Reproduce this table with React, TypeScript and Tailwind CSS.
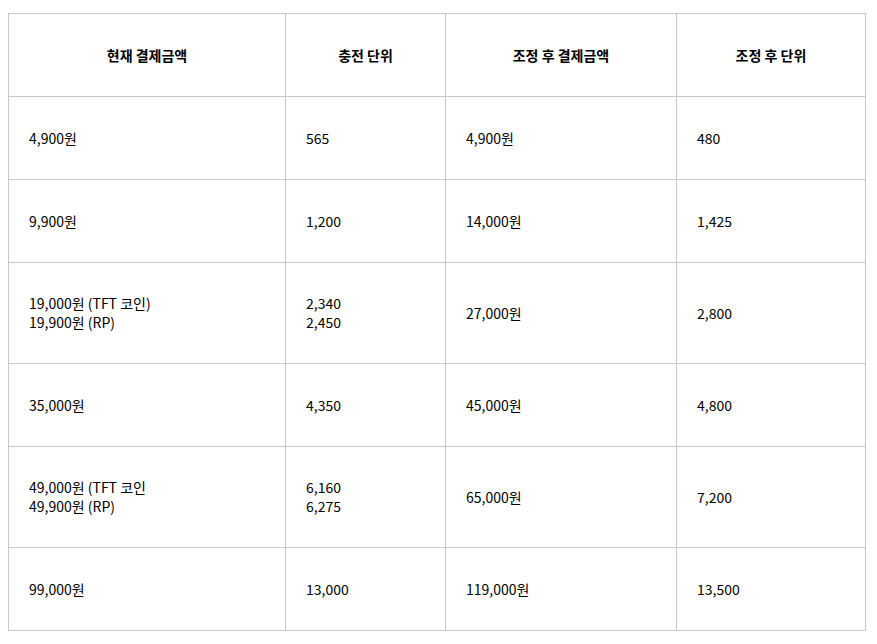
const rows: { cells: string[][]; tall?: boolean }[] = [
  { cells: [['4,900원'], ['565'], ['4,900원'], ['480']] },
  { cells: [['9,900원'], ['1,200'], ['14,000원'], ['1,425']] },
  { cells: [['19,000원 (TFT 코인)', '19,900원 (RP)'], ['2,340', '2,450'], ['27,000원'], ['2,800']], tall: true },
  { cells: [['35,000원'], ['4,350'], ['45,000원'], ['4,800']] },
  { cells: [['49,000원 (TFT 코인', '49,900원 (RP)'], ['6,160', '6,275'], ['65,000원'], ['7,200']], tall: true },
  { cells: [['99,000원'], ['13,000'], ['119,000원'], ['13,500']] },
];

const headers = ['현재 결제금액', '충전 단위', '조정 후 결제금액', '조정 후 단위'];
const widths = ['w-[277px]', 'w-[160px]', 'w-[231px]', 'w-[189px]'];

const App = () => {
  return (
    <div className="bg-white w-[877px] h-[644px] pt-[13px] pl-[8px] font-['Noto_Sans_CJK_KR','Malgun_Gothic',sans-serif] text-[14px] text-black">
      <table className="border-collapse table-fixed w-[858px]">
        <thead>
          <tr className="h-[83px]">
            {headers.map((h, i) => (
              <th key={h} className={`${widths[i]} border border-[#c8c8c8] text-center font-bold leading-[19px]`}>
                {h}
              </th>
            ))}
          </tr>
        </thead>
        <tbody>
          {rows.map((row, r) => (
            <tr key={r} className={row.tall ? 'h-[101px]' : 'h-[83px]'}>
              {row.cells.map((lines, c) => (
                <td key={c} className="border border-[#c8c8c8] pl-[20px] align-middle leading-[19px]">
                  {lines.map((l) => (
                    <div key={l}>{l}</div>
                  ))}
                </td>
              ))}
            </tr>
          ))}
        </tbody>
      </table>
    </div>
  );
};

export default App;
